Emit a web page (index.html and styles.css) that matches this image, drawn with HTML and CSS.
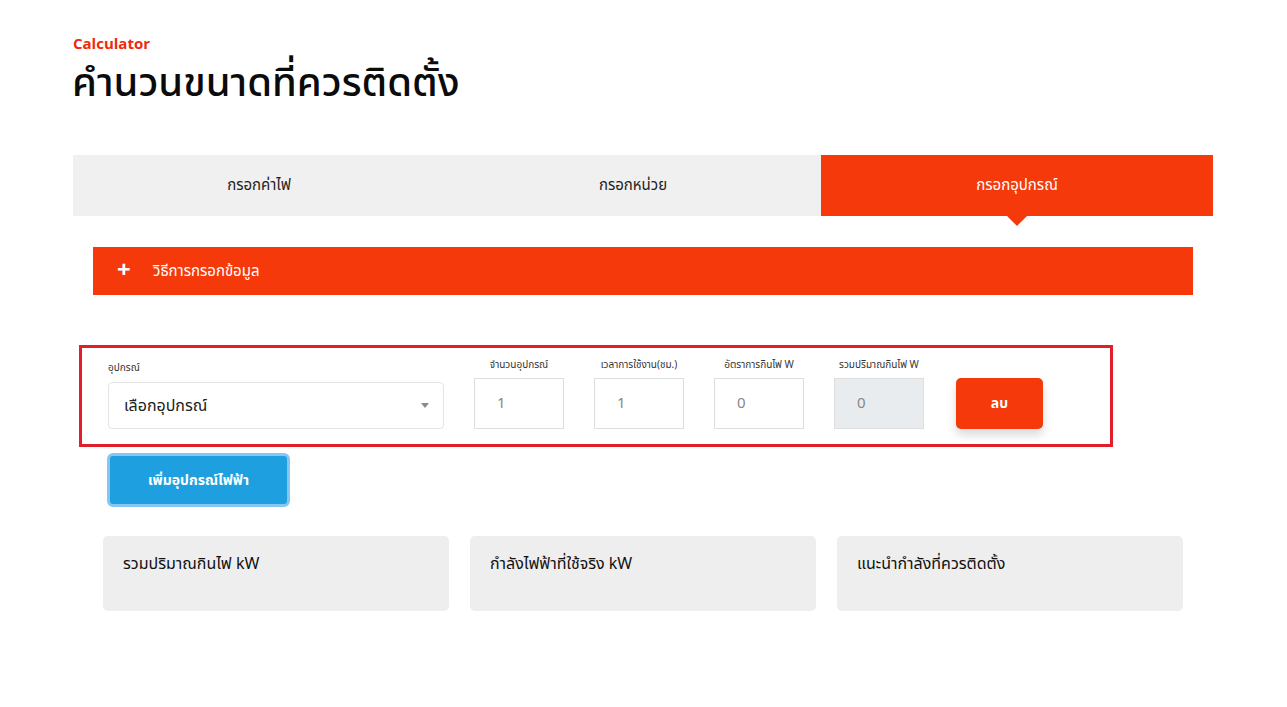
FILE: index.html
```html
<!DOCTYPE html>
<html lang="th">
<head>
    <meta charset="UTF-8">
    <meta name="viewport" content="width=device-width, initial-scale=1.0">
    <title>Calculator</title>
    <link rel="stylesheet" href="styles.css">
</head>
<body>
    <div class="page">
        <div class="eyebrow">Calculator</div>
        <h1>คำนวนขนาดที่ควรติดตั้ง</h1>

        <div class="tabs">
            <div class="tab tab-bill">กรอกค่าไฟ</div>
            <div class="tab tab-unit">กรอกหน่วย</div>
            <div class="tab tab-device active">กรอกอุปกรณ์</div>
        </div>

        <div class="inner">
            <div class="howto">
                <span class="plus">+</span>
                <span>วิธีการกรอกข้อมูล</span>
            </div>

            <div class="device-row">
                <div class="field field-select">
                    <label>อุปกรณ์</label>
                    <div class="select">
                        <span>เลือกอุปกรณ์</span>
                        <span class="caret"></span>
                    </div>
                </div>
                <div class="field">
                    <label>จำนวนอุปกรณ์</label>
                    <input class="num" type="text" value="1">
                </div>
                <div class="field">
                    <label>เวลาการใช้งาน(ชม.)</label>
                    <input class="num" type="text" value="1">
                </div>
                <div class="field">
                    <label>อัตราการกินไฟ W</label>
                    <input class="num" type="text" value="0">
                </div>
                <div class="field">
                    <label>รวมปริมาณกินไฟ W</label>
                    <input class="num readonly" type="text" value="0" readonly>
                </div>
                <button class="del-btn">ลบ</button>
            </div>

            <button class="add-btn">เพิ่มอุปกรณ์ไฟฟ้า</button>

            <div class="results">
                <div class="result-card">รวมปริมาณกินไฟ kW</div>
                <div class="result-card">กำลังไฟฟ้าที่ใช้จริง kW</div>
                <div class="result-card">แนะนำกำลังที่ควรติดตั้ง</div>
            </div>
        </div>
    </div>
</body>
</html>
```

FILE: styles.css
```css
body {
    margin: 0;
    padding: 0;
    background: #ffffff;
    color: #111111;
    font-family: "Noto Sans Thai", "Noto Sans", "Liberation Sans", sans-serif;
}
.page {
    padding: 35px 74px 0 73px;
}
.eyebrow {
    color: #ee2a0c;
    font-size: 15px;
    font-weight: bold;
    line-height: 20px;
}
h1 {
    margin: 4px 0 0 -1px;
    font-size: 40px;
    font-weight: 500;
    line-height: 50px;
    color: #0b0b0b;
}
.tabs {
    display: flex;
    margin-top: 46px;
    height: 61px;
}
.tab {
    position: relative;
    display: flex;
    align-items: center;
    justify-content: center;
    background: #f0f0f0;
    font-size: 15px;
    color: #222222;
}
.tab-bill {
    width: 372px;
}
.tab-unit {
    width: 376px;
}
.tab-device {
    flex: 1;
}
.tab.active {
    background: #f5390a;
    color: #ffffff;
}
.tab.active::after {
    content: "";
    position: absolute;
    left: 50%;
    bottom: -10px;
    margin-left: -10px;
    border-left: 10px solid transparent;
    border-right: 10px solid transparent;
    border-top: 10px solid #f5390a;
}
.inner {
    padding: 31px 20px 0 20px;
}
.howto {
    display: flex;
    align-items: center;
    height: 48px;
    padding-left: 24px;
    background: #f5390a;
    color: #ffffff;
    font-size: 15px;
}
.plus {
    font-size: 24px;
    font-weight: bold;
    width: 36px;
    line-height: 20px;
}
.device-row {
    display: flex;
    align-items: flex-end;
    gap: 30px;
    margin: 50px 0 0 -14px;
    width: 1034px;
    height: 102px;
    padding: 0 0 15px 26px;
    box-sizing: border-box;
    border: 3px solid #e31e2b;
}
.field {
    display: flex;
    flex-direction: column;
    align-items: center;
}
.field label {
    font-size: 10px;
    color: #333333;
    line-height: 14px;
    margin-bottom: 6px;
}
.field-select {
    align-items: flex-start;
}
.field-select label {
    margin-bottom: 7px;
}
.select {
    display: flex;
    align-items: center;
    justify-content: space-between;
    width: 336px;
    height: 47px;
    box-sizing: border-box;
    padding: 0 14px 0 15px;
    border: 1px solid #e4e4e4;
    border-radius: 4px;
    font-size: 16px;
    color: #222222;
}
.caret {
    border-left: 4px solid transparent;
    border-right: 4px solid transparent;
    border-top: 5px solid #8a8a8a;
}
.num {
    width: 90px;
    height: 51px;
    box-sizing: border-box;
    padding: 0 0 0 22px;
    border: 1px solid #dedede;
    font-family: inherit;
    font-size: 15px;
    color: #888888;
    outline: none;
}
.num.readonly {
    background: #e9ecef;
}
.del-btn {
    width: 87px;
    height: 51px;
    margin-left: 2px;
    border: none;
    border-radius: 5px;
    background: #f5390a;
    color: #ffffff;
    font-family: inherit;
    font-weight: bold;
    font-size: 14px;
    box-shadow: 0 6px 10px rgba(0, 0, 0, 0.15);
}
.add-btn {
    display: block;
    margin: 6px 0 0 14px;
    width: 183px;
    height: 54px;
    border: 3px solid #86c6f2;
    border-radius: 6px;
    background: #1e9fe0;
    color: #ffffff;
    font-family: inherit;
    font-weight: bold;
    font-size: 14px;
}
.results {
    display: flex;
    gap: 21px;
    margin: 29px 10px 0 10px;
}
.result-card {
    flex: 1;
    height: 75px;
    box-sizing: border-box;
    padding: 16px 20px;
    background: #eeeeee;
    border-radius: 5px;
    font-size: 16px;
    color: #111111;
}
```
